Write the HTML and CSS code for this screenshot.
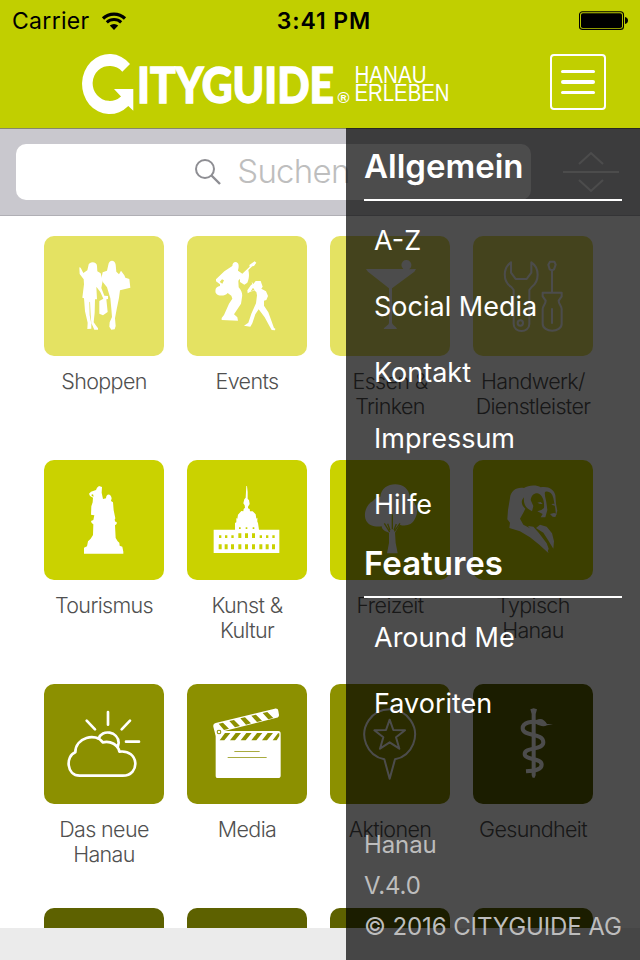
FILE: index.html
```
<!DOCTYPE html>
<html lang="de">
<head>
  <meta charset="UTF-8">
  <meta name="viewport" content="width=device-width, initial-scale=1.0">
  <title>Cityguide Hanau</title>
  <link rel="stylesheet" href="styles.css">
</head>
<body>
  <div class="app">
    <header class="header">
      <div class="status-bar">
        <div class="carrier">
          <span>Carrier</span>
          <svg class="wifi" viewBox="0 0 26 18">
            <path d="M2 6.5a16 16 0 0 1 22 0" fill="none" stroke="#000" stroke-width="3.2"/>
            <path d="M5.8 10.4a10.5 10.5 0 0 1 14.4 0" fill="none" stroke="#000" stroke-width="3"/>
            <path d="M8.8 13.6a6 6 0 0 1 8.4 0L13 18z"/>
          </svg>
        </div>
        <span class="time">3:41 PM</span>
        <svg class="battery" viewBox="0 0 50 20">
          <rect x="0.5" y="0.8" width="44" height="17.6" rx="3" fill="none" stroke="#000" stroke-width="1.1"/>
          <rect x="2" y="2.2" width="41" height="14.8" rx="1.8"/>
          <path d="M46 6c4 .5 4 6.500 0 7z"/>
        </svg>
      </div>
      <div class="title-bar">
        <svg class="logo" viewBox="0 0 376 62">
          <path d="M49 11A27.500 30 0 1 0 47.300 53L52.300 57.700V36H33L40 43.400A17 17.500 0 1 1 41.300 18.700z"/>
          <text class="logo-name" x="56" y="49.500" textLength="197" lengthAdjust="spacingAndGlyphs">ITYGUIDE</text>
          <text class="logo-reg" x="256.500" y="50" textLength="12" lengthAdjust="spacingAndGlyphs">®</text>
          <text class="logo-city" x="273.500" y="30" textLength="72" lengthAdjust="spacingAndGlyphs">HANAU</text>
          <text class="logo-city" x="273.500" y="48" textLength="95" lengthAdjust="spacingAndGlyphs">ERLEBEN</text>
        </svg>
        <button class="menu-btn">
          <span></span>
          <span></span>
          <span></span>
        </button>
      </div>
    </header>

    <div class="search-bar">
      <div class="search-field">
        <svg class="search-icon" viewBox="0 0 28 28">
          <circle cx="11" cy="11" r="9"/>
          <path d="M17.500 17.500L26 26" stroke-width="2.400"/>
        </svg>
        <span>Suchen</span>
      </div>
      <svg class="sort-icon" viewBox="0 0 56 44">
        <path d="M16 14L28 3l12 11M0 22h56M16 30l12 11 12-11"/>
      </svg>
    </div>

    <main class="grid">
      <div class="item">
        <div class="tile light">
          <svg viewBox="12 18 360 360">
            <path d="M145 108c0-15 26-15 26 0l1 16 10 6 6 22-4 22 9 23 11 1v9l-5 1 4 38-14 10-11-5v-38l12-7-9-20-12-16 2 38h-6l-1 40-3 29 13 18v4h-11l-9-20-2-23-2-41-2 2 1 39 5 25v15l-12 1 1-19-8-34-3-39-5-2 5-40-1-15-12-16-1-20 4 1 8 16 12-8z"/>
            <path d="M205 104c2-16 20-16 22 0l2 21 8 8 6-11 10 14 3 7 12 4 3 26-31 8-3 22-7 35-5 27 2 23-3 10-10 1-6-9 1-13 7-16-2-25-3-31-10-33-12-15-5-11 4-19 13-5z"/>
          </svg>
        </div>
        <p>Shoppen</p>
      </div>
      <div class="item">
        <div class="tile light">
          <svg viewBox="441 18 360 360">
            <path d="M577 108c0-16 19-15 19-1 0 11-3 13-2 15l13 9 22-21-1-5 16-11 5 4-7 10-5 1-12 11c3 12 3 24-3 38l-9 6-13-8 0-10-5 6 1 20c9 10 12 20 10 30l-3 19-21 32 10 9 2 10-49-2v-6l7-9 15-34 10-15-3-9-11-8c-9 11-31 10-36-1-3-12 3-19 13-20v-5l-12-9v-6l25-24z M546 148l-7 8 8 5 5-10z" fill-rule="evenodd"/>
            <path d="M640 162l7-9h15l6 17-4 6 14 8 6 14-5 12-7 2 0 15 13 20 17 47 4 2-1 5-10-1-8-14-13-24-18-24-10 15-9 27-6 10-19-3 13-9 9-27 14-31 3-24-2-10-8-6-18 10-1-9 11-16 4-2-2-8z M639 173l-8 13 13-5z" fill-rule="evenodd"/>
          </svg>
        </div>
        <p>Events</p>
      </div>
      <div class="item">
        <div class="tile light">
          <svg viewBox="15 18 360 360">
            <path d="M123 117h112a15 15 0 1 1 17 1l21-1-5 8-67 50v104c3 8 12 10 15 18h-40c4-8 14-10 16-18V175l-63-50z"/>
          </svg>
        </div>
        <p>Essen &amp;<br>Trinken</p>
      </div>
      <div class="item">
        <div class="tile light">
          <svg class="line" viewBox="444 18 360 360">
            <path d="M558 97c-25 17-25 58 1 74l7 9v102c0 28 47 28 47 0V180l7-9c24-16 24-58-1-74v31l-14 19h-33l-14-19z"/>
            <circle cx="586" cy="279" r="8"/>
            <path d="M681 188v-67M675 95h13l4 9-5 14-6 3-7-3-4-14zM653 188h57v11l-9 13c0 11 9 15 9 26v43c0 28-57 28-57 0v-43c0-11 9-15 9-26l-9-13zM681 237v42"/>
          </svg>
        </div>
        <p>Handwerk/<br>Dienstleister</p>
      </div>

      <div class="item">
        <div class="tile green">
          <svg viewBox="12 15 360 360">
            <path d="M171 98l6-5 9 3-1 17 4 19 9-2c0-15 15-16 17 0l-2 8 6 4 2 24 5 24-2 4 2 6 4 1v6l-5 4 2 38 6 10 5 4 1 9 8 3 3 15v6H132v-18l9-4 3-15 8-8 7-11 1-32-5-4-2-6 7-3 3-14-10-2 1-25 4-12 1-14-9-5-3-7 6-6 15-5z M156 118l-2 3 6 5v-7z" fill-rule="evenodd"/>
          </svg>
        </div>
        <p>Tourismus</p>
      </div>
      <div class="item">
        <div class="tile green">
          <svg viewBox="441 15 360 360">
            <path d="M619 93h2l2 18v20l4 5 2 11-5 8v5l5 2 1 7h8l9 9 2 13 3-3v12l2 4 3 20h61v70H521v-70h64v-20l4-2v-13l3 2 2-12 10-11 6 1 1-7 4-4-1-7-4-6 3-12 4-5z"/>
            <path class="cut" d="M537 241h7v8h-7zM555 241h7v8h-7zM574 241h7v8h-7zM595 235h9v14h-9zM615 235h9v14h-9zM636 235h9v14h-9zM659 241h7v8h-7zM678 241h7v8h-7zM697 241h7v8h-7zM536 268h9v15h-9zM554 268h9v15h-9zM573 268h9v15h-9zM595 268h9v15h-9zM615 268h9v15h-9zM636 268h9v15h-9zM658 268h9v15h-9zM677 268h9v15h-9zM696 268h9v15h-9zM597 217h5v5h-5zM617 217h5v5h-5zM638 217h5v5h-5z"/>
          </svg>
        </div>
        <p>Kunst &amp;<br>Kultur</p>
      </div>
      <div class="item">
        <div class="tile green">
          <svg viewBox="15 15 360 360">
            <path d="M166 125c4-50 88-50 88 3 23 18 28 44 15 65-8 18-29 22-45 16l-14 24 2 31 6 31h-32l6-31v-31l-12-5c-8-4-9-9-10-14-20 3-38-2-46-16-10-17-2-50 20-60 6-8 13-12 22-13z"/>
            <path class="cut-line" d="M178 205l16 26M188 206l7 20M202 178v45M225 205l-17 24M214 207l-7 18"/>
          </svg>
        </div>
        <p>Freizeit</p>
      </div>
      <div class="item">
        <div class="tile green">
          <svg viewBox="444 15 360 360">
            <g transform="translate(525 69)">
              <path d="M30 60C32 38 50 26 72 30C85 20 112 20 122 28C145 24 162 34 166 52L168 78L172 98L168 112L166 92L160 60C156 44 145 38 135 42C132 50 140 70 140 80L142 96L136 118L122 118L128 108L112 100L124 96L132 90C134 70 128 50 112 46C100 46 94 54 92 66L100 84L96 100L84 92C74 86 70 70 72 58C60 70 66 84 76 92L70 104L60 122L70 140L100 156L130 190L146 226L118 200L90 178L60 160L28 150L30 134L22 124L24 96z"/>
              <path d="M84 144L100 146L116 164L140 196L146 212L142 222L118 184z"/>
              <path d="M120 140L140 146L156 166L162 190L160 212L144 186L130 164L108 150z"/>
              <path d="M112 74l10-2 6 6-8 0zM154 78l9-1 3 6-7-1zM150 108l12-3 8 2-4 10-8-1z"/>
            </g>
          </svg>
        </div>
        <p>Typisch<br>Hanau</p>
      </div>

      <div class="item">
        <div class="tile olive">
          <svg class="line bold" viewBox="12 12 360 360">
            <path d="M204 96v38M140 122l25 26M270 122l-25 26M258 185h39M176 176c9-30 59-22 60 12l-3 14"/>
            <path d="M119 287c-40 0-43-59-13-70 0-45 62-60 82-30 24-6 47 8 50 28 60-8 64 72 10 72z"/>
          </svg>
        </div>
        <p>Das neue<br>Hanau</p>
      </div>
      <div class="item">
        <div class="tile olive">
          <svg viewBox="441 12 360 360">
            <path d="M520 140c-1-6 2-9 7-11l177-43c7-1 10 1 11 7l2 11c0 5-2 8-7 9l-157 40h162c5 0 7 3 7 8v126c0 5-3 7-7 7H533c-4 0-6-3-6-7V168z"/>
            <path class="cut" d="M536 131l13-3 18 18-15 4zM568 123l14-3 18 18-15 4zM601 115l14-3 18 18-15 4zM634 107l14-3 18 18-15 4zM668 99l14-3 18 18-15 4zM555 159h16l-18 22h-14zM587 159h16l-18 22h-15zM619 159h16l-18 22h-15zM651 159h16l-18 22h-15zM683 159h16l-18 22h-15zM714 160h4v8l-8 13h-12zM583 213h76v2h-76zM563 232h117v2H563z"/>
            <circle class="cut" cx="537" cy="156" r="7"/>
            <circle cx="537" cy="156" r="4"/>
          </svg>
        </div>
        <p>Media</p>
      </div>
      <div class="item">
        <div class="tile olive">
          <svg class="line" viewBox="15 12 360 360">
            <path d="M178 238a76 76 0 1 1 32 0l-16 58z"/>
            <path d="M194 119l11 31 35 1-27 21 10 34-29-19-29 19 10-34-27-21 35-1z"/>
          </svg>
        </div>
        <p>Aktionen</p>
      </div>
      <div class="item">
        <div class="tile dark">
          <svg viewBox="444 12 360 360">
            <path d="M616 88l10-3 10 3-4 14v184l-3 7h-6l-3-7V102z"/>
            <path d="M650 128c-32-7-57 0-57 17 0 27 62 11 62 42 0 25-56 13-56 35 0 19 51 11 51 32 0 14-18 18-47 20" fill="none" stroke="#fff" stroke-width="12"/>
            <path d="M634 120c15-7 25 0 32 12l18 1-18 3c-10 5-21 2-31-3z"/>
          </svg>
        </div>
        <p>Gesundheit</p>
      </div>

      <div class="item"><div class="tile dark"></div></div>
      <div class="item"><div class="tile dark"></div></div>
      <div class="item"><div class="tile dark"></div></div>
      <div class="item"><div class="tile dark"></div></div>
    </main>

    <div class="bottom-bar"></div>

    <!-- slide-in menu over the content -->
    <nav class="menu">
      <h2>Allgemein</h2>
      <ul>
        <li>A-Z</li>
        <li>Social Media</li>
        <li>Kontakt</li>
        <li>Impressum</li>
        <li>Hilfe</li>
      </ul>
      <h2 class="second">Features</h2>
      <ul>
        <li>Around Me</li>
        <li>Favoriten</li>
      </ul>
      <div class="menu-info">
        <p>Hanau</p>
        <p>V.4.0</p>
        <p>© 2016 CITYGUIDE AG</p>
      </div>
    </nav>
  </div>
</body>
</html>
```
FILE: styles.css
```
* {
  box-sizing: border-box;
}
body {
  margin: 0;
  font-family: Inter, "Liberation Sans", sans-serif;
  background: #fff;
}
.app {
  position: relative;
  display: flex;
  flex-direction: column;
  width: 640px;
  height: 960px;
  overflow: hidden;
}

/* header */
.header {
  height: 128px;
  background: #c1cf00;
}
.status-bar {
  display: grid;
  grid-template-columns: 1fr auto 1fr;
  align-items: center;
  height: 41px;
  padding: 0 11px 0 12px;
  font-size: 23px;
}
.carrier {
  display: flex;
  align-items: center;
  gap: 11px;
  letter-spacing: 0.3px;
}
.wifi {
  width: 26px;
  height: 18px;
}
.time {
  font-weight: 600;
  letter-spacing: 0.9px;
  padding-left: 7px;
}
.battery {
  width: 50px;
  height: 20px;
  justify-self: end;
}
.title-bar {
  display: flex;
  justify-content: space-between;
  align-items: flex-start;
  padding: 12px 34px 0 81px;
}
.logo {
  width: 376px;
  height: 62px;
  fill: #fff;
}
.logo-name {
  font-family: Lato, sans-serif;
  font-weight: 900;
  font-size: 50px;
  stroke: #fff;
  stroke-width: 1.4px;
}
.logo-reg {
  font-family: "Liberation Sans", sans-serif;
  font-weight: bold;
  font-size: 15px;
}
.logo-city {
  font-family: "Liberation Sans", sans-serif;
  font-size: 23px;
}
.menu-btn {
  display: flex;
  flex-direction: column;
  justify-content: center;
  align-items: center;
  gap: 7px;
  width: 56px;
  height: 56px;
  margin-top: 1px;
  padding: 0;
  background: none;
  border: 2px solid #fff;
  border-radius: 4px;
}
.menu-btn span {
  width: 34px;
  height: 3.5px;
  border-radius: 2px;
  background: #fff;
}

/* search */
.search-bar {
  display: flex;
  align-items: center;
  gap: 32px;
  height: 88px;
  padding: 0 21px 0 16px;
  background: #c9c8ce;
  border-top: 1px solid #85876d;
  border-bottom: 1px solid #b0afb5;
}
.search-field {
  display: flex;
  justify-content: center;
  align-items: center;
  gap: 15px;
  width: 515px;
  height: 56px;
  padding: 0 3px 3px 0;
  border-radius: 10px;
  background: #fff;
  color: #bebebe;
  font-size: 33px;
  font-weight: 350;
  letter-spacing: -0.7px;
}
.search-icon {
  width: 28px;
  height: 28px;
  margin-top: 3px;
  fill: none;
  stroke: #8e8e93;
  stroke-width: 2;
}
.sort-icon {
  width: 56px;
  height: 44px;
  fill: none;
  stroke: #fff;
  stroke-width: 2;
}

/* categories */
.grid {
  display: grid;
  grid-template-columns: repeat(4, 120px);
  grid-auto-rows: 224px;
  column-gap: 23px;
  height: 712px;
  padding: 20px 0 0 44px;
  overflow: hidden;
}
.tile {
  height: 120px;
  border-radius: 10px;
}
.tile svg {
  display: block;
  width: 120px;
  height: 120px;
  fill: #fff;
}
.tile .line {
  fill: none;
  stroke: #fff;
  stroke-width: 6;
  stroke-linejoin: round;
  stroke-linecap: round;
}
.tile .bold {
  stroke-width: 8;
}
.light {
  background: #e4e262;
}
.green {
  background: #cad200;
}
.olive {
  background: #8c9000;
}
.dark {
  background: #5d6100;
}
.green .cut {
  fill: #cad200;
}
.olive .cut {
  fill: #8c9000;
}
.cut-line {
  fill: none;
  stroke: #cad200;
  stroke-width: 4;
}
.item p {
  margin: 13px -10px 0;
  text-align: center;
  font-size: 21.5px;
  font-weight: 300;
  letter-spacing: -0.65px;
  line-height: 25px;
  color: #505050;
}
.bottom-bar {
  height: 32px;
  background: #ebebeb;
}

/* menu */
.menu {
  position: absolute;
  top: 128px;
  right: 0;
  bottom: 0;
  display: flex;
  flex-direction: column;
  width: 294px;
  padding: 0 18px 13px;
  background: rgba(0, 0, 0, 0.7);
  color: #fff;
}
.menu h2 {
  height: 73px;
  margin: 0;
  border-bottom: 2px solid #fff;
  font-size: 33px;
  font-weight: 600;
  line-height: 77px;
}
.menu .second {
  height: 60px;
  line-height: 51px;
}
.menu ul {
  margin: 0;
  padding: 7px 0 0 10px;
  list-style: none;
}
.menu li {
  height: 66px;
  line-height: 66px;
  font-size: 27px;
}
.menu-info {
  margin-top: auto;
  font-size: 24px;
  letter-spacing: -0.1px;
  color: #bdbdbd;
}
.menu-info p {
  margin: 0;
  line-height: 41px;
  white-space: nowrap;
}
```
